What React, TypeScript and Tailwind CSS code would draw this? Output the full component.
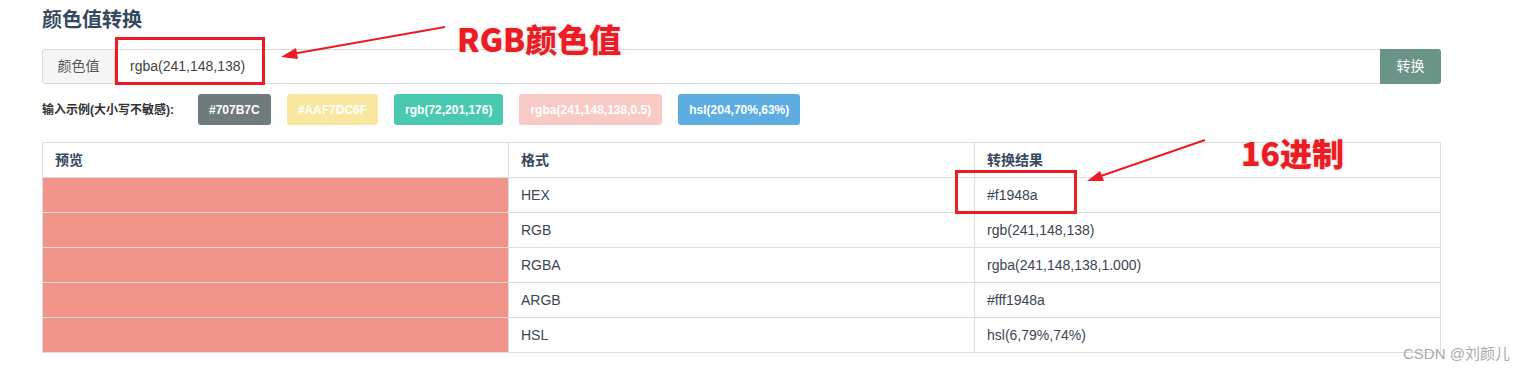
const samples = [
  { label: '#707B7C', bg: 'bg-[#707b7c]' },
  { label: '#AAF7DC6F', bg: 'bg-[#f9e79f]' },
  { label: 'rgb(72,201,176)', bg: 'bg-[#48c9b0]' },
  { label: 'rgba(241,148,138,0.5)', bg: 'bg-[#f8cac5]' },
  { label: 'hsl(204,70%,63%)', bg: 'bg-[#5dade2]' },
];

const results = [
  { format: 'HEX', value: '#f1948a' },
  { format: 'RGB', value: 'rgb(241,148,138)' },
  { format: 'RGBA', value: 'rgba(241,148,138,1.000)' },
  { format: 'ARGB', value: '#fff1948a' },
  { format: 'HSL', value: 'hsl(6,79%,74%)' },
];

const annoText =
  'absolute whitespace-nowrap font-["Noto_Sans_CJK_SC",sans-serif] text-[32px] leading-none font-black text-[#ec1c24] [text-shadow:0_0_2px_#fff,0_0_3px_#bbb]';

export default function App() {
  return (
    <div className="relative h-[372px] w-[1519px] bg-white font-['Liberation_Sans','Noto_Sans_CJK_SC',sans-serif] text-[14px] text-[#3a4654]">
      <div className="flex w-[1441px] flex-col pl-[42px] pt-[8px]">
        <h2 className="text-[20px] leading-[24px] font-bold text-[#34495e]">颜色值转换</h2>

        <div className="mt-[17px] flex h-[35px]">
          <span className="flex w-[73px] items-center justify-center rounded-l-[3px] border border-[#d9d9d9] bg-[#f5f5f5] text-[14px] text-[#555]">
            颜色值
          </span>
          <div className="flex flex-1 items-center border-y border-[#d9d9d9] pl-[15px] text-[14px] text-[#444]">
            rgba(241,148,138)
          </div>
          <button className="w-[61px] rounded-r-[3px] bg-[#6b9488] text-[14px] text-white">转换</button>
        </div>

        <div className="mt-[10px] flex h-[31px] items-center gap-4">
          <span className="mr-[8px] text-[12px] font-bold text-[#333]">输入示例(大小写不敏感):</span>
          {samples.map((s) => (
            <span
              key={s.label}
              className={`flex h-[31px] items-center rounded-[3px] px-[11px] text-[12px] font-bold text-white ${s.bg}`}
            >
              {s.label}
            </span>
          ))}
        </div>

        <table className="mt-[17px] w-full table-fixed border-collapse border border-[#ddd]">
          <thead>
            <tr className="h-[35px]">
              <th className="border border-[#ddd] px-3 text-left font-bold text-[#34495e]">预览</th>
              <th className="border border-[#ddd] px-3 text-left font-bold text-[#34495e]">格式</th>
              <th className="border border-[#ddd] px-3 text-left font-bold text-[#34495e]">转换结果</th>
            </tr>
          </thead>
          <tbody>
            {results.map((r) => (
              <tr key={r.format} className="h-[35px]">
                <td className="border border-[#ddd] bg-[#f1948a]" />
                <td className="border border-[#ddd] px-3">{r.format}</td>
                <td className="border border-[#ddd] px-3">{r.value}</td>
              </tr>
            ))}
          </tbody>
        </table>
      </div>

      {/* annotations drawn over the screenshot */}
      <div className="absolute left-[115px] top-[37px] h-[48px] w-[150px] border-[3px] border-[#ec1c24]" />
      <div className="absolute left-[955px] top-[170px] h-[44px] w-[122px] border-[3px] border-[#ec1c24]" />
      <svg className="absolute left-0 top-0" width="1519" height="372">
        <line x1="445" y1="27" x2="292" y2="54" stroke="#ec1c24" strokeWidth="2" />
        <polygon points="281,57 296,48 298,59" fill="#ec1c24" />
        <line x1="1205" y1="140" x2="1098" y2="177" stroke="#ec1c24" strokeWidth="2" />
        <polygon points="1087,181 1100,171 1104,181" fill="#ec1c24" />
      </svg>
      <span className={`${annoText} left-[457px] top-[22px]`}>RGB颜色值</span>
      <span className={`${annoText} left-[1241px] top-[136px]`}>16进制</span>

      <span className="absolute left-[1403px] top-[345px] text-[15px] leading-[17px] text-[#aaa]">CSDN @刘颜儿</span>
    </div>
  );
}
